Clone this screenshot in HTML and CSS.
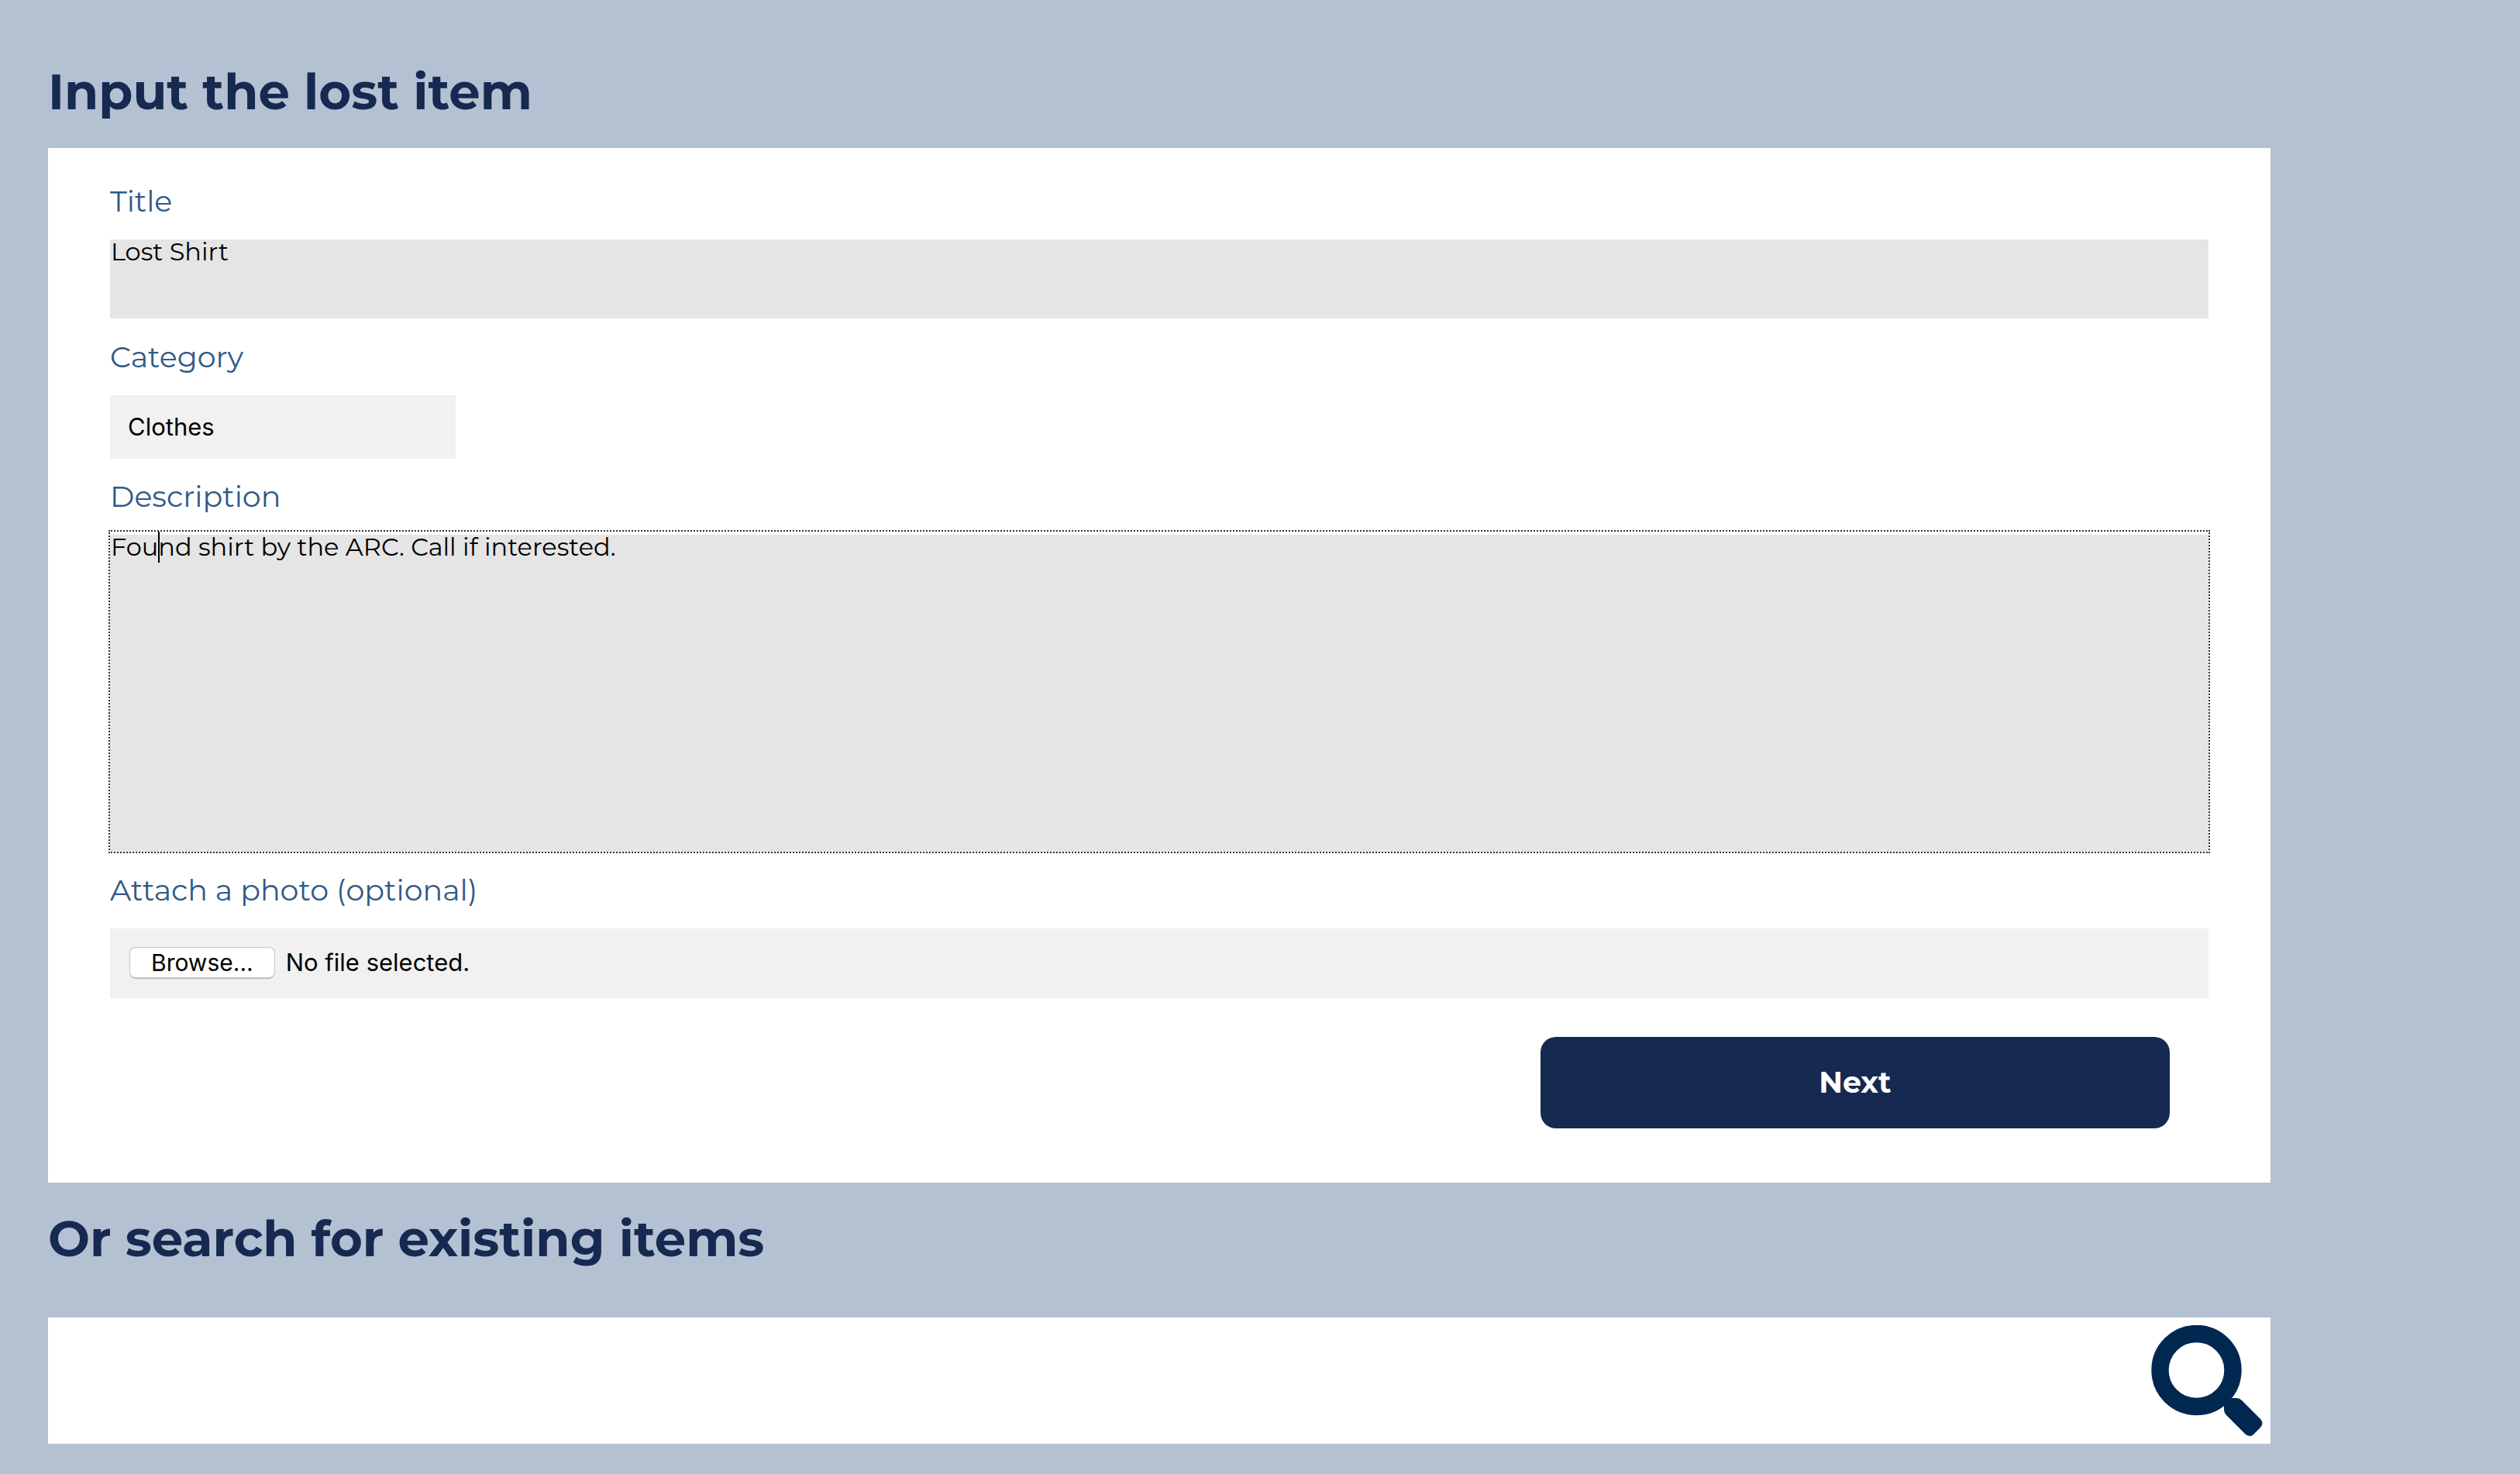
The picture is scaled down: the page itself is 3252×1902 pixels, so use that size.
FILE: index.html
```html
<!DOCTYPE html>
<html lang="en">
<head>
<meta charset="utf-8">
<title>Lost and Found</title>
<link rel="stylesheet" href="styles.css">
</head>
<body>
<main class="page">
  <h1 class="heading">Input the lost item</h1>
  <form class="card">
    <label class="label" for="title">Title</label>
    <input class="field title-field" id="title" type="text" value="Lost Shirt">

    <label class="label" for="category">Category</label>
    <select class="category" id="category">
      <option selected>Clothes</option>
      <option>Electronics</option>
      <option>Other</option>
    </select>

    <label class="label" for="description">Description</label>
    <div class="description">
      <textarea class="field description-field" id="description">Found shirt by the ARC. Call if interested.</textarea>
      <span class="caret"></span>
    </div>

    <label class="label" for="photo">Attach a photo (optional)</label>
    <div class="file">
      <span class="file-button">Browse...</span>
      <span class="file-name">No file selected.</span>
      <input class="file-input" id="photo" type="file">
    </div>

    <button class="next" type="button">Next</button>
  </form>

  <h2 class="heading search-heading">Or search for existing items</h2>
  <form class="search" role="search">
    <input class="search-input" type="search" aria-label="Search existing items">
    <button class="search-button" type="button" aria-label="Search">
      <svg class="search-icon" viewBox="0 0 144 144" aria-hidden="true">
        <circle cx="58.500" cy="58" r="47" fill="none" stroke="currentColor" stroke-width="22.400"/>
        <path d="M104 94H110Q114 94 117 97L141 121Q146 127 141 132L132 141Q128 145 122 141L97 116Q94 113 94 109V104Z" fill="currentColor"/>
      </svg>
    </button>
  </form>
</main>
</body>
</html>
```

FILE: styles.css
```css
* {
  box-sizing: border-box;
}

body {
  margin: 0;
  background: #b4c1d2;
  font-family: Montserrat, Inter, sans-serif;
}

.page {
  padding: 78px 322px 39px 62px;
}

.heading {
  margin: 0 0 33px;
  color: #152951;
  font-size: 64px;
  font-weight: 700;
  line-height: 80px;
}

.card {
  display: flex;
  flex-direction: column;
  align-items: stretch;
  padding: 45px 80px 70px;
  background: #fff;
}

.label {
  margin-bottom: 25px;
  color: #2f5a87;
  font-size: 38px;
  line-height: 48px;
}

.field {
  display: block;
  width: 100%;
  border: 0;
  border-radius: 0;
  background: #e5e5e5;
  color: #000;
  font: 32px/32px Montserrat, Inter, sans-serif;
}

.title-field {
  height: 102px;
  margin-bottom: 26px;
  padding: 0 1px 72px;
  line-height: 30px;
}

.category {
  width: 446px;
  height: 82px;
  margin-bottom: 25px;
  padding: 0 23px;
  border: 0;
  border-radius: 0;
  appearance: none;
  background: #f1f1f1;
  color: #000;
  font: 31px/40px Inter, sans-serif;
}

.description {
  position: relative;
  margin-bottom: 26px;
}

.description-field {
  height: 409px;
  padding: 0 1px;
  resize: none;
}

/* Focus ring, slightly taller than the field */
.description::after {
  content: "";
  position: absolute;
  inset: -6px -2px -2px;
  border: 2px dotted #333;
  pointer-events: none;
}

.caret {
  position: absolute;
  top: -4px;
  left: 62px;
  width: 2px;
  height: 40px;
  background: #000;
}

.file {
  position: relative;
  display: flex;
  align-items: center;
  gap: 15px;
  height: 90px;
  margin-bottom: 50px;
  padding: 0 26px 2px;
  background: #f1f1f1;
  color: #000;
  font: 31px/38px Inter, sans-serif;
}

.file-button {
  padding: 0 27px;
  border-radius: 7px;
  background: #fff;
  box-shadow: 0 0 0 1px #c8c8c8, 0 2px 1px #b0b0b0;
  font-size: 30px;
}

.file-input {
  position: absolute;
  inset: 0;
  width: 100%;
  opacity: 0;
}

.next {
  align-self: flex-end;
  width: 30%;
  height: 118px;
  margin-right: 50px;
  border: 0;
  border-radius: 20px;
  background: #152951;
  color: #fff;
  font: 700 38px/48px Montserrat, Inter, sans-serif;
}

.search-heading {
  margin: 32px 0 62px;
}

.search {
  display: flex;
  align-items: center;
  height: 163px;
  padding-right: 10px;
  background: #fff;
}

.search-input {
  flex: 1;
  align-self: stretch;
  border: 0;
  background: transparent;
  font: 32px/40px Montserrat, Inter, sans-serif;
}

.search-button {
  padding: 0;
  border: 0;
  background: transparent;
  color: #002850;
}

.search-icon {
  display: block;
  width: 144px;
  height: 144px;
}
```
